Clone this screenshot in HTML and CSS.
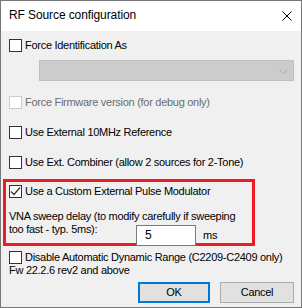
FILE: index.html
```html
<!DOCTYPE html>
<html lang="en">
<head>
    <meta charset="UTF-8">
    <title>RF Source configuration</title>
    <link rel="stylesheet" href="styles.css">
</head>
<body>

    <div class="window">
        <div class="titlebar">
            <span class="title">RF Source configuration</span>
            <!-- close button -->
            <svg class="close" width="10" height="10" viewBox="0 0 10 10">
                <path d="M0.5 0.5 L9.5 9.5 M9.5 0.5 L0.5 9.5" stroke="#000" stroke-width="1" fill="none"/>
            </svg>
        </div>

        <div class="client">
            <label class="check first">
                <span class="box"></span>
                <span>Force Identification As</span>
            </label>

            <div class="combo">
                <svg width="9" height="5" viewBox="0 0 9 5">
                    <path d="M0.5 0.5 L4.5 4.5 L8.5 0.5" stroke="#a8a8a8" stroke-width="1" fill="none"/>
                </svg>
            </div>

            <label class="check disabled">
                <span class="box"></span>
                <span>Force Firmware version (for debug only)</span>
            </label>

            <label class="check spaced">
                <span class="box"></span>
                <span>Use External 10MHz Reference</span>
            </label>

            <label class="check spaced">
                <span class="box"></span>
                <span>Use Ext. Combiner (allow 2 sources for 2-Tone)</span>
            </label>

            <!-- red highlight frame -->
            <div class="highlight">
                <label class="check">
                    <span class="box">
                        <svg width="11" height="11" viewBox="0 0 11 11">
                            <path d="M1 5.5 L4 8.5 L10 1.5" stroke="#333" stroke-width="1.2" fill="none"/>
                        </svg>
                    </span>
                    <span>Use a Custom External Pulse Modulator</span>
                </label>

                <div class="delay-text">VNA sweep delay (to modify carefully if sweeping</div>
                <div class="delay-row">
                    <span class="delay-label">too fast - typ. 5ms):</span>
                    <div class="textbox">5</div>
                    <span class="unit">ms</span>
                </div>
            </div>

            <label class="check after-frame">
                <span class="box"></span>
                <span>Disable Automatic Dynamic Range (C2209-C2409 only)</span>
            </label>
            <div class="note">Fw 22.2.6 rev2 and above</div>

            <div class="buttons">
                <div class="button default">OK</div>
                <div class="button cancel">Cancel</div>
            </div>
        </div>
    </div>

</body>
</html>
```

FILE: styles.css
```css
body {
    margin: 0;
    font-family: "Liberation Sans", Arial, sans-serif;
    font-size: 11px;
    color: #000;
}

.window {
    width: 302px;
    height: 308px;
    box-sizing: border-box;
    border: 1px solid #777777;
    background-color: #f0f0f0;
    display: flex;
    flex-direction: column;
}

.titlebar {
    height: 30px;
    background-color: #fff;
    display: flex;
    align-items: center;
    justify-content: space-between;
    padding: 0 9px 0 8px;
}

.title {
    font-size: 12px;
    letter-spacing: -0.1px;
    margin-top: -2px;
}

.close {
    margin-top: -1px;
}

.client {
    padding: 0 7px 0 8px;
    line-height: 13px;
    letter-spacing: -0.28px;
    white-space: nowrap;
}

.check {
    display: flex;
    align-items: center;
    gap: 3px;
    height: 13px;
}

.check .box {
    width: 11px;
    height: 11px;
    border: 1px solid #333;
    background-color: #fff;
    display: flex;
    align-items: center;
    justify-content: center;
    flex-shrink: 0;
}

.check.first {
    margin-top: 8px;
}

.check.disabled {
    margin-top: 15px;
    color: #6d6d6d;
}

.check.disabled .box {
    border-color: #cccccc;
}

.check.spaced {
    margin-top: 17px;
}

.combo {
    margin: 8px 0 0 30px;
    height: 19px;
    width: 253px;
    background-color: #cccccc;
    border: 1px solid #bfbfbf;
    display: flex;
    align-items: center;
    justify-content: flex-end;
}

.combo svg {
    margin-right: 5px;
    margin-top: 2px;
}

.highlight {
    margin: 10px 0 0 -6px;
    width: 243px;
    border: 3px solid #ed1c24;
    padding: 3px 0 0 3px;
}

.delay-text {
    margin-top: 12px;
}

.delay-row {
    display: flex;
    align-items: flex-start;
}

.delay-label {
    width: 127px;
}

.textbox {
    position: relative; /* sits over the red frame's bottom edge */
    margin: 2px 0 -3px 0;
    width: 50px;
    height: 19px;
    background-color: #fff;
    border: 1px solid #7a7a7a;
    padding-left: 8px;
    line-height: 19px;
    font-size: 12px;
}

.unit {
    margin: 6px 0 0 7px;
}

.check.after-frame {
    margin-top: 5px;
}

.buttons {
    display: flex;
    justify-content: flex-end;
    gap: 10px;
    margin-top: 5px;
}

.button {
    height: 19px;
    background-color: #e1e1e1;
    border: 1px solid #adadad;
    text-align: center;
    line-height: 19px;
}

.button.default {
    width: 68px;
    height: 17px;
    border: 2px solid #0078d7;
    line-height: 17px;
}

.button.cancel {
    width: 72px;
}
```
